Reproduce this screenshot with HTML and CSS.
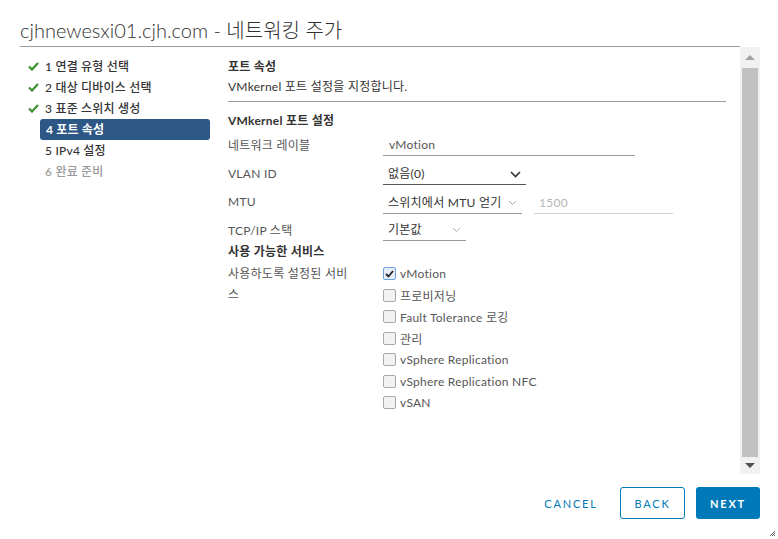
FILE: index.html
```html
<!DOCTYPE HTML>
<html>
<head>
	<meta http-equiv="Content-Type" content="text/html; charset=utf-8">
	<title>네트워킹 주가</title>
	<link rel="stylesheet" href="styles.css">
</head>
<body>
<div class="wizard">
	<div class="wizard-head">
		<h1 class="wizard-title">cjhnewesxi01.cjh.com - 네트워킹 주가</h1>
	</div>

	<div class="wizard-main">
		<ul class="steps">
			<li class="step done"><svg class="tick" width="11" height="9" viewBox="0 0 11 9"><path d="M1 4.5 L4 7.5 L10 1" fill="none" stroke="#3d8f2f" stroke-width="2.2"/></svg><span class="step-name">1 연결 유형 선택</span></li>
			<li class="step done"><svg class="tick" width="11" height="9" viewBox="0 0 11 9"><path d="M1 4.5 L4 7.5 L10 1" fill="none" stroke="#3d8f2f" stroke-width="2.2"/></svg><span class="step-name">2 대상 디바이스 선택</span></li>
			<li class="step done"><svg class="tick" width="11" height="9" viewBox="0 0 11 9"><path d="M1 4.5 L4 7.5 L10 1" fill="none" stroke="#3d8f2f" stroke-width="2.2"/></svg><span class="step-name">3 표준 스위치 생성</span></li>
			<li class="step active"><span class="step-name">4 포트 속성</span></li>
			<li class="step"><span class="step-name">5 IPv4 설정</span></li>
			<li class="step disabled"><span class="step-name">6 완료 준비</span></li>
		</ul>

		<div class="page">
			<div class="page-head">
				<div class="page-title">포트 속성</div>
				<div class="page-desc">VMkernel 포트 설정을 지정합니다.</div>
			</div>

			<div class="section-title">VMkernel 포트 설정</div>
			<div class="form-row">
				<div class="label">네트워크 레이블</div>
				<div class="field text-field w252">vMotion</div>
			</div>
			<div class="form-row">
				<div class="label">VLAN ID</div>
				<div class="field select-field dark w143">없음(0)
					<svg class="chev" width="11" height="7" viewBox="0 0 11 7"><path d="M1 1 L5.5 5.5 L10 1" fill="none" stroke="#333" stroke-width="1.6"/></svg>
				</div>
			</div>
			<div class="form-row">
				<div class="label">MTU</div>
				<div class="field select-field w139">스위치에서 MTU 얻기
					<svg class="chev" width="9" height="6" viewBox="0 0 9 6"><path d="M1 1 L4.5 4.5 L8 1" fill="none" stroke="#aaa" stroke-width="1"/></svg>
				</div>
				<div class="field text-field disabled w139">1500</div>
			</div>
			<div class="form-row last">
				<div class="label">TCP/IP 스택</div>
				<div class="field select-field w83">기본값
					<svg class="chev" width="9" height="6" viewBox="0 0 9 6"><path d="M1 1 L4.5 4.5 L8 1" fill="none" stroke="#aaa" stroke-width="1"/></svg>
				</div>
			</div>

			<div class="section-title services-title">사용 가능한 서비스</div>
			<div class="services">
				<div class="label wrap">사용하도록 설정된 서비스</div>
				<ul class="checks">
					<li><span class="box checked"><svg width="9" height="8" viewBox="0 0 9 8"><path d="M1 4 L3.5 6.5 L8 1" fill="none" stroke="#222" stroke-width="1.8"/></svg></span>vMotion</li>
					<li><span class="box"></span>프로비저닝</li>
					<li><span class="box"></span>Fault Tolerance 로깅</li>
					<li><span class="box"></span>관리</li>
					<li><span class="box"></span>vSphere Replication</li>
					<li><span class="box"></span>vSphere Replication NFC</li>
					<li><span class="box"></span>vSAN</li>
				</ul>
			</div>
		</div>

		<div class="scrollbar">
			<div class="arrow up"></div>
			<div class="thumb"></div>
			<div class="arrow down"></div>
		</div>
	</div>

	<div class="wizard-foot">
		<button class="btn btn-link">CANCEL</button>
		<button class="btn btn-outline">BACK</button>
		<button class="btn btn-primary">NEXT</button>
	</div>

	<svg class="grip" width="7" height="7" viewBox="0 0 7 7"><path d="M6 1 L1 6 M6 3 L3 6 M6 5 L5 6" stroke="#666" stroke-width="1"/></svg>
</div>
</body>
</html>
```

FILE: styles.css
```css
body{
	margin: 0;
	background-color: #fff;
	font-family: "Lato", "Noto Sans CJK KR", sans-serif;
	font-size: 12px;
	color: #565656;
}
ul{
	list-style: none;
	margin: 0;
	padding: 0;
}
.wizard{
	width: 778px;
	height: 539px;
	display: flex;
	flex-direction: column;
	position: relative;
	overflow: hidden;
}

.wizard-head{
	height: 46px;
	margin: 0 38px 0 20px;
	border-bottom: 1px solid #9a9a9a;
}
.wizard-title{
	margin: 0;
	padding-top: 17px;
	font-size: 20px;
	line-height: 26px;
	font-weight: 300;
	color: #313131;
}

.wizard-main{
	height: 427px;
	display: flex;
}

/* left step list */
.steps{
	width: 210px;
	margin-right: 10px;
	padding-top: 9px;
}
.step{
	height: 21px;
	display: flex;
	align-items: center;
	padding-left: 40px;
	position: relative;
	font-weight: 500;
	letter-spacing: 0.2px;
	color: #333;
}
.step .tick{
	position: absolute;
	left: 28px;
	top: 6px;
}
.step-name{
	flex: 1;
	height: 21px;
	line-height: 21px;
	padding-left: 5px;
	border-radius: 3px;
}
.step.active .step-name{
	background-color: #2d5784;
	color: #fff;
	font-weight: 700;
	padding-left: 6px;
}
.step.disabled{
	color: #9a9a9a;
}

/* content */
.page{
	flex: 1;
	padding: 0 14px 0 8px;
	letter-spacing: 0.25px;
}
.page-head{
	padding-top: 10px;
	padding-bottom: 4px;
	border-bottom: 1px solid #9a9a9a;
}
.page-title{
	line-height: 20px;
	font-weight: 700;
	color: #333;
}
.page-desc{
	line-height: 20px;
	color: #333;
}
.section-title{
	margin-top: 10px;
	line-height: 18px;
	font-weight: 700;
	color: #333;
}
.services-title{
	margin-top: 0;
	line-height: 20px;
}

.form-row{
	height: 28.7px;
	display: flex;
	align-items: center;
}
.form-row.last{
	height: 26px;
}
.label{
	width: 155px;
	flex-shrink: 0;
}
.field{
	height: 23px;
	line-height: 24px;
	box-sizing: border-box;
	border-bottom: 1px solid #9a9a9a;
	position: relative;
	margin-top: 1px;
}
.text-field{
	padding-left: 6px;
	color: #565656;
}
.text-field.disabled{
	margin-left: 12px;
	padding-left: 5px;
	color: #b5b5b5;
	border-bottom-color: #d0d0d0;
}
.select-field{
	padding-left: 5px;
	color: #333;
}
.select-field.dark{
	border-bottom-color: #555;
}
.chev{
	position: absolute;
	right: 5px;
	top: 9px;
}
.w252{ width: 252px; }
.w143{ width: 143px; }
.w139{ width: 139px; }
.w83{ width: 83px; }

.services{
	display: flex;
	padding-top: 1px;
}
.label.wrap{
	width: 126px;
	margin-right: 29px;
	line-height: 21px;
}
.checks li{
	height: 21.5px;
	display: flex;
	align-items: center;
	color: #565656;
}
.box{
	width: 11px;
	height: 11px;
	margin-right: 4px;
	border: 1px solid #a8a8a8;
	border-radius: 2px;
	background-color: #f2f2f2;
	display: flex;
	align-items: center;
	justify-content: center;
}
.box.checked{
	border-color: #6d9ee0;
	background-color: #e6eef9;
}

/* scrollbar */
.scrollbar{
	width: 20px;
	margin-right: 18px;
	background-color: #f1f1f1;
	display: flex;
	flex-direction: column;
	align-items: center;
}
.thumb{
	width: 16px;
	flex: 1;
	background-color: #c1c1c1;
}
.arrow{
	width: 0;
	height: 0;
	border-left: 5px solid transparent;
	border-right: 5px solid transparent;
}
.arrow.up{
	margin: 8px 0 8px;
	border-bottom: 5px solid #a3a3a3;
}
.arrow.down{
	margin: 6px 0 6px;
	border-top: 5px solid #505050;
}

/* footer */
.wizard-foot{
	flex: 1;
	display: flex;
	justify-content: flex-end;
	align-items: flex-start;
	padding: 13px 18px 0 0;
}
.btn{
	height: 32px;
	padding: 0;
	border: 0;
	background: none;
	font-family: "Lato", sans-serif;
	font-size: 11px;
	letter-spacing: 1.8px;
	border-radius: 3px;
	color: #0079b8;
	cursor: pointer;
}
.btn-link{
	width: 58px;
	margin-right: 20px;
}
.btn-outline{
	width: 65px;
	margin-right: 11px;
	border: 1px solid #0079b8;
}
.btn-primary{
	width: 64px;
	background-color: #0079b8;
	color: #fff;
	font-weight: 700;
}
.grip{
	position: absolute;
	right: 2px;
	bottom: 2px;
}
```
